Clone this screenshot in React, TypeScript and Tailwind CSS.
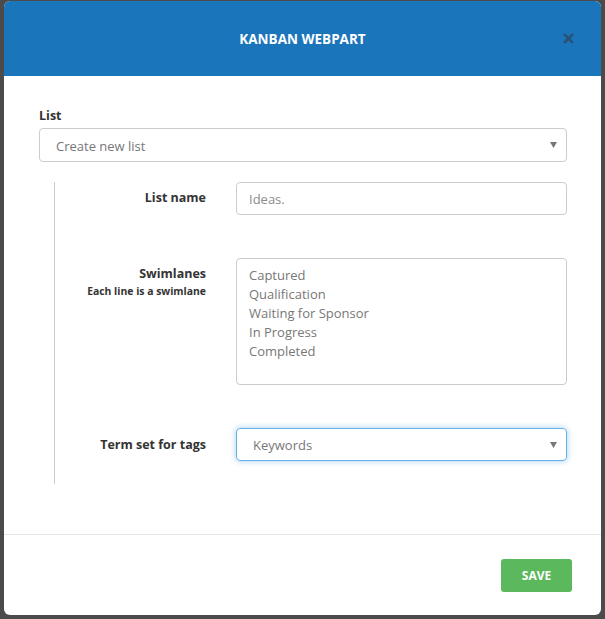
import React from 'react';

const Caret = () => (
  <svg width="7" height="6" viewBox="0 0 7 6" className="shrink-0">
    <path d="M0 0 L7 0 L3.5 6 Z" fill="#777" />
  </svg>
);

const App = () => {
  return (
    <div className="h-[619px] w-[605px] overflow-hidden bg-[#4b4b4b] pt-px pl-1 font-['Open_Sans',sans-serif]">
      <div className="w-[597px] h-[614px] flex flex-col overflow-hidden rounded-md bg-white">
        <header className="flex h-[75px] shrink-0 items-center bg-[#1b75bb] pl-[45px]">
          <h1 className="flex-1 pt-px text-center text-[13.5px] font-bold text-white">KANBAN WEBPART</h1>
          <button className="mr-[21px] flex h-6 w-6 items-center justify-center">
            <svg width="11" height="11" viewBox="0 0 11 11">
              <path d="M1 1 L10 10 M10 1 L1 10" stroke="#285377" strokeWidth="2.6" />
            </svg>
          </button>
        </header>

        <div className="flex-1 pl-[35px] pr-[34px] pt-[31px]">
          <label className="block text-[12.5px] font-bold leading-[18px] text-[#333]">List</label>
          <div className="mt-[3px] flex h-[34px] items-center justify-between rounded border border-[#ccc] pl-4 pr-[9px] text-[13px] text-[#777]">
            <span className="pt-[3px]">Create new list</span>
            <Caret />
          </div>

          <div className="ml-[15px] mt-5 h-[302px] border-l border-[#ccc]">
            <div className="grid grid-cols-[151px_1fr] gap-x-[30px] gap-y-[43px]">
              <div className="pt-[7px] text-right text-[12.5px] font-bold leading-[18px] text-[#333]">List name</div>
              <div className="flex h-[33px] items-center rounded border border-[#ccc] px-3 pt-[2px] text-[13px] text-[#8c8c8c]">
                Ideas.
              </div>

              <div className="pt-[7px] text-right text-[#333]">
                <div className="text-[12.5px] font-bold leading-[18px]">Swimlanes</div>
                <div className="text-[10.4px] font-bold leading-[16px]">Each line is a swimlane</div>
              </div>
              <div className="h-[127px] rounded border border-[#ccc] px-3 pt-[7px] text-[13px] leading-[19px] text-[#777]">
                <div>Captured</div>
                <div>Qualification</div>
                <div>Waiting for Sponsor</div>
                <div>In Progress</div>
                <div>Completed</div>
              </div>

              <div className="pt-[8px] text-right text-[12.5px] font-bold leading-[18px] text-[#333]">Term set for tags</div>
              <div className="flex h-[33px] items-center justify-between rounded border border-[#66afe9] pl-4 pr-[9px] text-[13px] text-[#777] shadow-[0_0_6px_rgba(102,175,233,0.6)]">
                <span className="pt-[3px]">Keywords</span>
                <Caret />
              </div>
            </div>
          </div>
        </div>

        <footer className="flex h-[81px] shrink-0 items-start justify-end border-t border-[#e5e5e5] pr-[29px] pt-6">
          <button className="h-[33px] w-[71px] rounded-[3px] bg-[#5cb85c] text-[12px] font-bold text-white">SAVE</button>
        </footer>
      </div>
    </div>
  );
};

export default App;
